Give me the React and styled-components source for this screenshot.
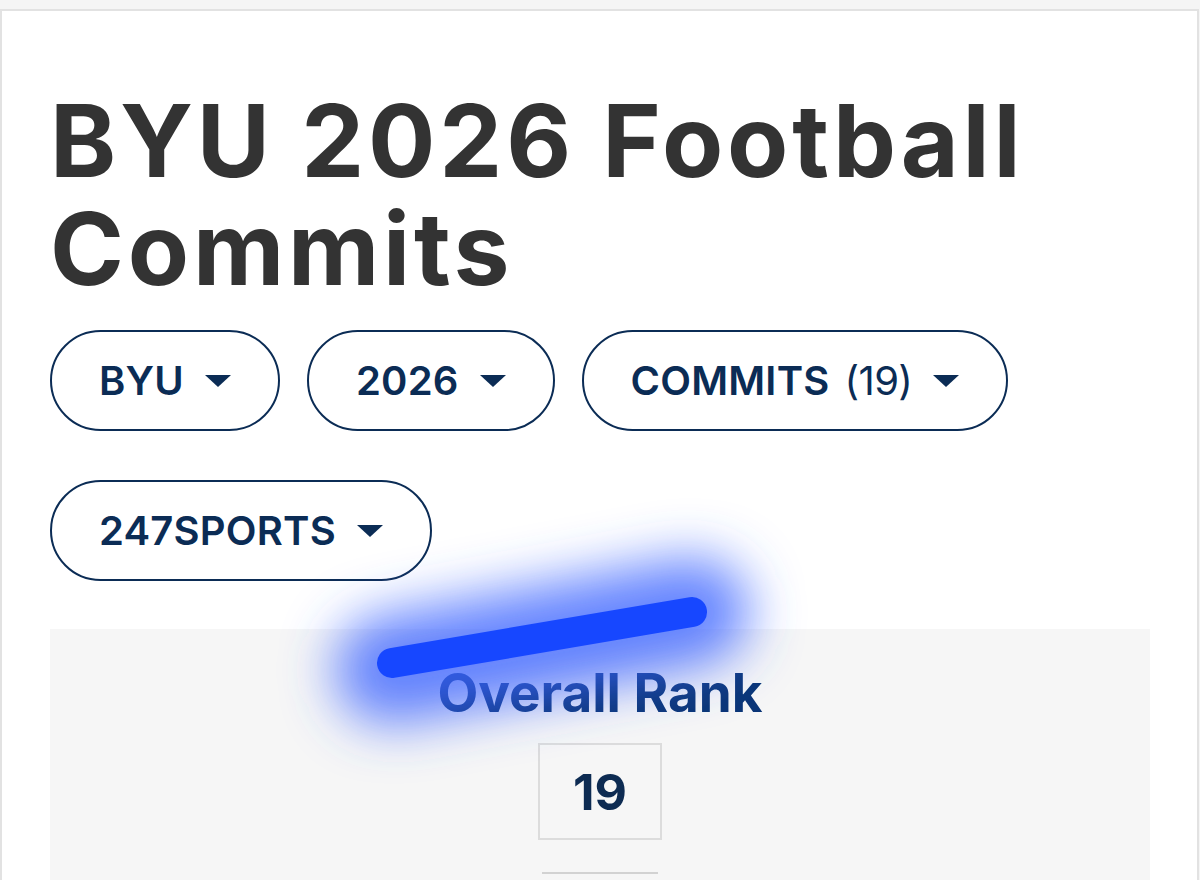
import styled, { createGlobalStyle } from "styled-components";

const GlobalStyle = createGlobalStyle`
  html, body {
    margin: 0;
    padding: 0;
    background: #f5f5f5;
  }
  * {
    box-sizing: border-box;
  }
`;

const Page = styled.div`
  position: relative;
  width: 1200px;
  height: 880px;
  overflow: hidden;
  padding-top: 9px;
  font-family: Inter, "Noto Sans", sans-serif;
`;

const Card = styled.div`
  width: 1199px;
  height: 871px;
  background: #fff;
  border: 2px solid #e2e2e2;
  border-bottom: none;
  padding: 0 0 0 48px;
`;

const Title = styled.h1`
  margin: 76px 0 0;
  font-size: 100px;
  line-height: 108px;
  font-weight: 700;
  color: #333;
  letter-spacing: 3.8px;
`;

const TitleLine = styled.span`
  display: block;
  height: 108px;
`;

const Filters = styled.div`
  display: flex;
  flex-wrap: wrap;
  gap: 49px 27px;
  width: 1100px;
  margin-top: 27px;
`;

const Pill = styled.button`
  display: flex;
  align-items: center;
  height: 101px;
  padding: 0 47px;
  border: 2.5px solid #0b2c55;
  border-radius: 51px;
  background: #fff;
  font-family: inherit;
  font-size: 40px;
  font-weight: 600;
  color: #0b2c55;
  letter-spacing: 0.2px;
`;

const Count = styled.span`
  font-weight: 400;
  margin-left: 15px;
  letter-spacing: -0.6px;
`;

const Caret = styled.span`
  width: 0;
  height: 0;
  margin-left: 21px;
  border-left: 13px solid transparent;
  border-right: 13px solid transparent;
  border-top: 12px solid #0b2c55;
`;

const Panel = styled.div`
  width: 1100px;
  height: 300px;
  margin-top: 48px;
  background: #f6f6f6;
  display: flex;
  flex-direction: column;
  align-items: center;
  padding-top: 34px;
`;

const PanelHeading = styled.h2`
  margin: 0;
  font-size: 53px;
  line-height: 60px;
  font-weight: 700;
  color: #0a3576;
`;

const RankBox = styled.div`
  margin-top: 20px;
  width: 124px;
  height: 97px;
  border: 2px solid #dcdcdc;
  display: flex;
  align-items: center;
  justify-content: center;
  font-size: 50px;
  font-weight: 700;
  color: #0d2b52;
`;

const Divider = styled.div`
  margin-top: 32px;
  width: 116px;
  height: 2px;
  background: #d2d2d2;
`;

const Scribble = styled.svg`
  position: absolute;
  left: 0;
  top: 0;
  pointer-events: none;
`;

const filters = [
  { label: "BYU" },
  { label: "2026" },
  { label: "COMMITS", count: 19 },
  { label: "247SPORTS" },
];

export default function App() {
  return (
    <Page>
      <GlobalStyle />
      <Card>
        <Title>
          <TitleLine>BYU 2026 Football</TitleLine>
          <TitleLine>Commits</TitleLine>
        </Title>
        <Filters>
          {filters.map((f) => (
            <Pill key={f.label}>
              {f.label}
              {f.count != null && <Count>({f.count})</Count>}
              <Caret />
            </Pill>
          ))}
        </Filters>
        <Panel>
          <PanelHeading>Overall Rank</PanelHeading>
          <RankBox>19</RankBox>
          <Divider />
        </Panel>
      </Card>
      <Scribble width="1200" height="880" viewBox="0 0 1200 880">
        <defs>
          <filter
            id="glow"
            filterUnits="userSpaceOnUse"
            x="150"
            y="400"
            width="800"
            height="450"
          >
            <feGaussianBlur stdDeviation="26" />
          </filter>
        </defs>
        <line
          x1="390"
          y1="670"
          x2="694"
          y2="612"
          stroke="#3d66ff"
          strokeOpacity="0.8"
          strokeWidth="110"
          strokeLinecap="round"
          filter="url(#glow)"
        />
        <line
          x1="392"
          y1="663"
          x2="692"
          y2="612"
          stroke="#1747ff"
          strokeWidth="30"
          strokeLinecap="round"
        />
      </Scribble>
    </Page>
  );
}
